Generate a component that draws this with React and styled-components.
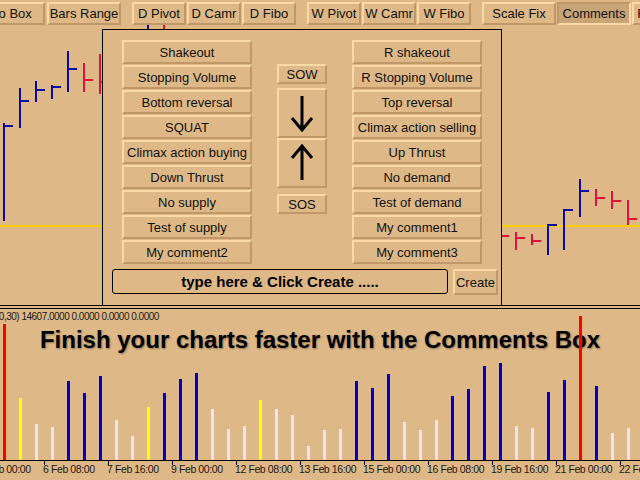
import React from 'react';
import styled, { createGlobalStyle, css } from 'styled-components';

const GlobalStyle = createGlobalStyle`
  html, body {
    margin: 0;
    padding: 0;
  }
  body {
    background: #deb887;
    font-family: "Liberation Sans", Arial, sans-serif;
  }
  * {
    box-sizing: border-box;
  }
`;

const LIGHT = '#f9d9a6';
const DARK = '#c09766';

const bevel = css`
  background-color: ${p => (p.$pressed ? '#c9a476' : '#deb887')};
  border-style: solid;
  border-width: 2px;
  border-color: ${p =>
    p.$pressed ? `${DARK} ${LIGHT} ${LIGHT} ${DARK}` : `${LIGHT} ${DARK} ${DARK} ${LIGHT}`};
  display: flex;
  align-items: center;
  justify-content: center;
  color: #111;
  font-size: 13px;
  white-space: nowrap;
  overflow: hidden;
`;

const Screen = styled.div`
  width: 640px;
  height: 480px;
  overflow: hidden;
  background: #deb887;
  display: flex;
  flex-direction: column;
`;

const MainChart = styled.div`
  position: relative;
  height: 305px;
  flex-shrink: 0;
  overflow: hidden;
`;

const ChartSvg = styled.svg`
  display: block;
`;

const Toolbar = styled.div`
  position: absolute;
  top: 2px;
  left: -29px;
  display: flex;
  gap: 11px;
`;

const ToolGroup = styled.div`
  display: flex;
  gap: ${p => p.$gap}px;
`;

const ToolButton = styled.div`
  ${bevel}
  width: ${p => p.$w}px;
  height: 23px;
  flex-shrink: 0;
`;

const Panel = styled.div`
  position: absolute;
  top: 29px;
  left: 102px;
  width: 400px;
  height: 290px;
  border: 1px solid #000;
  background: #deb887;
  padding-top: 10px;
`;

const Columns = styled.div`
  display: flex;
  gap: 25px;
  padding: 0 19px;
`;

const Column = styled.div`
  width: 130px;
  display: flex;
  flex-direction: column;
  gap: 1px;
`;

const SignalColumn = styled.div`
  width: 50px;
  display: flex;
  flex-direction: column;
  padding-top: 24px;
`;

const CommentButton = styled.div`
  ${bevel}
  height: 24px;
`;

const SignalButton = styled.div`
  ${bevel}
  height: ${p => p.$h}px;
  margin-top: ${p => p.$mt || 0}px;
`;

const BottomRow = styled.div`
  display: flex;
  gap: 5px;
  margin-top: 5px;
  padding: 0 3px 0 9px;
`;

const TextField = styled.div`
  flex: 1;
  height: 25px;
  border: 1px solid #000;
  border-radius: 3px;
  display: flex;
  align-items: center;
  justify-content: center;
  font-weight: bold;
  font-size: 15px;
  color: #000;
`;

const CreateButton = styled.div`
  ${bevel}
  width: 45px;
  height: 26px;
`;

const Separator = styled.div`
  height: 4px;
  flex-shrink: 0;
  border-top: 1px solid #000;
  border-bottom: 1px solid #000;
`;

const SubWindow = styled.div`
  position: relative;
  height: 152px;
  flex-shrink: 0;
  border-bottom: 1px solid #000;
`;

const VolumeSvg = styled.svg`
  display: block;
  position: relative;
  z-index: 1;
`;

const Legend = styled.div`
  position: absolute;
  top: 0;
  left: 0;
  right: 0;
  display: flex;
  flex-direction: column;
`;

const IndicatorLabel = styled.div`
  margin: 2px 0 0 -4px;
  font-size: 10px;
  letter-spacing: -0.5px;
  line-height: 12px;
  color: #1a1a1a;
  white-space: nowrap;
`;

const Headline = styled.div`
  margin-top: 3px;
  font-size: 24px;
  line-height: 28px;
  font-weight: bold;
  text-align: center;
  color: #000;
  text-shadow: 1px 1px 2px rgba(0, 0, 0, 0.35);
  white-space: nowrap;
`;

const TimeAxis = styled.div`
  display: flex;
  margin-left: -21px;
  height: 19px;
`;

const TimeLabel = styled.div`
  width: 64px;
  flex-shrink: 0;
  padding-top: 2px;
  font-size: 10.5px;
  letter-spacing: -0.4px;
  line-height: 13px;
  color: #1a1a1a;
  white-space: nowrap;
  background: linear-gradient(#000, #000) no-repeat 1px 0 / 1px 4px;
`;

const BLUE = '#0a0aa0';
const RED = '#dc143c';

const priceBars = [
  [4, 123, 221, 126, BLUE],
  [20, 88, 128, 101, BLUE],
  [36, 81, 102, 90, BLUE],
  [52, 85, 99, 87, BLUE],
  [68, 51, 92, 69, BLUE],
  [84, 63, 92, 80, RED],
  [100, 54, 94, 82, RED],
  [148, 18, 60, 40, BLUE],
  [164, 22, 70, 50, RED],
  [500, 228, 250, 236, RED],
  [516, 232, 250, 238, RED],
  [532, 234, 245, 241, RED],
  [548, 224, 255, 225, BLUE],
  [564, 209, 250, 210, BLUE],
  [580, 179, 217, 191, BLUE],
  [596, 189, 206, 198, RED],
  [612, 191, 209, 201, RED],
  [628, 200, 225, 219, RED],
];

const VB = '#0000cd';
const VY = '#ffff00';
const VW = '#ece6f0';
const VR = '#ff0000';

const volumes = [
  [VR, 324], [VY, 398], [VW, 424], [VW, 427], [VB, 381], [VB, 393], [VB, 376], [VW, 420],
  [VW, 436], [VY, 407], [VB, 393], [VB, 379], [VB, 373], [VW, 409], [VW, 429], [VW, 426],
  [VY, 400], [VW, 409], [VW, 415], [VW, 446], [VW, 430], [VW, 429], [VB, 381], [VB, 388],
  [VB, 374], [VW, 422], [VW, 430], [VW, 420], [VB, 396], [VB, 389], [VB, 366], [VB, 363],
  [VW, 426], [VW, 428], [VB, 392], [VB, 380], [VR, 316], [VB, 386], [VW, 433], [VW, 428],
];

const leftComments = [
  'Shakeout',
  'Stopping Volume',
  'Bottom reversal',
  'SQUAT',
  'Climax action buying',
  'Down Thrust',
  'No supply',
  'Test of supply',
  'My comment2',
];

const rightComments = [
  'R shakeout',
  'R Stopping Volume',
  'Top reversal',
  'Climax action selling',
  'Up Thrust',
  'No demand',
  'Test of demand',
  'My comment1',
  'My comment3',
];

const timeLabels = [
  '5 Feb 00:00',
  '6 Feb 08:00',
  '7 Feb 16:00',
  '9 Feb 00:00',
  '12 Feb 08:00',
  '13 Feb 16:00',
  '15 Feb 00:00',
  '16 Feb 08:00',
  '19 Feb 16:00',
  '21 Feb 00:00',
  '22 Feb 08:00',
];

function Arrow({ up }) {
  return (
    <svg width="24" height="38" viewBox="0 0 24 38">
      {up ? (
        <path d="M12 36 V3 M2 14 L12 2 L22 14" fill="none" stroke="#000" strokeWidth="3" />
      ) : (
        <path d="M12 2 V35 M2 24 L12 36 L22 24" fill="none" stroke="#000" strokeWidth="3" />
      )}
    </svg>
  );
}

export default function App() {
  return (
    <>
      <GlobalStyle />
      <Screen>
        <MainChart>
          <ChartSvg width="640" height="305">
            <rect x="0" y="225" width="640" height="2" fill="#f8d000" />
            {priceBars.map(([x, top, bottom, close, color], i) => (
              <g key={i} fill={color}>
                <rect x={x - 1} y={top} width="2" height={bottom - top} />
                <rect x={x + 1} y={close - 1} width="8" height="2" />
              </g>
            ))}
          </ChartSvg>

          <Toolbar>
            <ToolGroup $gap={2}>
              <ToolButton $w={74}>Info Box</ToolButton>
              <ToolButton $w={74}>Bars Range</ToolButton>
            </ToolGroup>
            <ToolGroup $gap={1}>
              <ToolButton $w={54}>D Pivot</ToolButton>
              <ToolButton $w={54}>D Camr</ToolButton>
              <ToolButton $w={54}>D Fibo</ToolButton>
            </ToolGroup>
            <ToolGroup $gap={1}>
              <ToolButton $w={54}>W Pivot</ToolButton>
              <ToolButton $w={54}>W Camr</ToolButton>
              <ToolButton $w={54}>W Fibo</ToolButton>
            </ToolGroup>
            <ToolGroup $gap={1}>
              <ToolButton $w={74}>Scale Fix</ToolButton>
              <ToolButton $w={74} $pressed>Comments</ToolButton>
              <ToolButton $w={74}>Future Box</ToolButton>
            </ToolGroup>
          </Toolbar>

          <Panel>
            <Columns>
              <Column>
                {leftComments.map(c => (
                  <CommentButton key={c}>{c}</CommentButton>
                ))}
              </Column>
              <SignalColumn>
                <SignalButton $h={20}>SOW</SignalButton>
                <SignalButton $h={50} $mt={4}>
                  <Arrow />
                </SignalButton>
                <SignalButton $h={50}>
                  <Arrow up />
                </SignalButton>
                <SignalButton $h={20} $mt={6}>SOS</SignalButton>
              </SignalColumn>
              <Column>
                {rightComments.map(c => (
                  <CommentButton key={c}>{c}</CommentButton>
                ))}
              </Column>
            </Columns>
            <BottomRow>
              <TextField>type here &amp; Click Create .....</TextField>
              <CreateButton>Create</CreateButton>
            </BottomRow>
          </Panel>
        </MainChart>

        <Separator />

        <SubWindow>
          <VolumeSvg width="640" height="151">
            {volumes.map(([color, top], i) => (
              <rect key={i} x={3 + i * 16} y={top - 309} width="3" height={460 - top} fill={color} />
            ))}
          </VolumeSvg>
          <Legend>
            <IndicatorLabel>(0,30) 14607.0000 0.0000 0.0000 0.0000</IndicatorLabel>
            <Headline>Finish your charts faster with the Comments Box</Headline>
          </Legend>
        </SubWindow>

        <TimeAxis>
          {timeLabels.map(t => (
            <TimeLabel key={t}>{t}</TimeLabel>
          ))}
        </TimeAxis>
      </Screen>
    </>
  );
}
